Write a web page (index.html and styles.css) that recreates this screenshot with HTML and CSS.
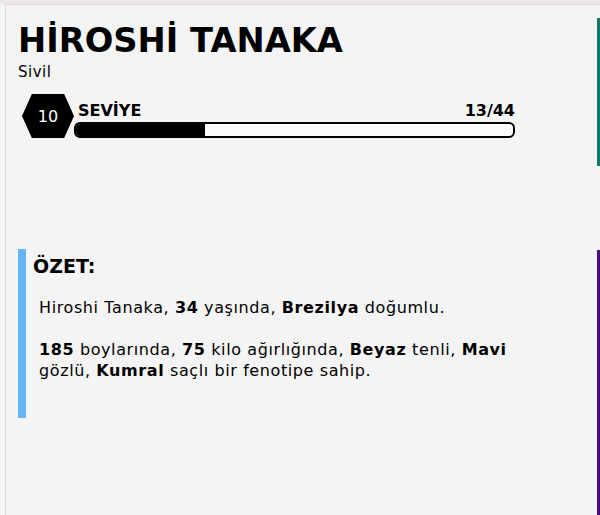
FILE: index.html
```html
<!DOCTYPE html>
<html lang="tr">
<head>
    <meta charset="UTF-8">
    <meta name="viewport" content="width=device-width, initial-scale=1">
    <title>Karakter</title>
    <link rel="stylesheet" href="styles.css">
</head>
<body>
    <div class="topbar"></div>

    <div class="frame">
        <div class="main">
            <div class="header">
                <h1 class="name">HİROSHİ TANAKA</h1>
                <div class="role">Sivil</div>

                <div class="level">
                    <div class="hex">10</div>
                    <div class="level-info">
                        <div class="level-head">
                            <span>SEVİYE</span>
                            <span class="xp">13/44</span>
                        </div>
                        <div class="bar">
                            <div class="bar-fill" style="width: 29.5%"></div>
                        </div>
                    </div>
                </div>
            </div>

            <div class="summary">
                <h2>ÖZET:</h2>
                <p>Hiroshi Tanaka, <b>34</b> yaşında, <b>Brezilya</b> doğumlu.</p>
                <p><b>185</b> boylarında, <b>75</b> kilo ağırlığında, <b>Beyaz</b> tenli, <b>Mavi</b> gözlü, <b>Kumral</b> saçlı bir fenotipe sahip.</p>
            </div>
        </div>

        <!-- yan kartlar, ekranın dışına taşıyor -->
        <div class="side">
            <div class="side-card teal"></div>
            <div class="side-card purple"></div>
        </div>
    </div>
</body>
</html>
```

FILE: styles.css
```css
html, body {
     margin: 0;
     height: 100%;
     overflow: hidden;
 }

body {
     display: flex;
     flex-direction: column;
     background-color: #f4f4f4;
     font-family: "DejaVu Sans", "Noto Sans", sans-serif;
     color: #000;
 }

.topbar {
     height: 4px;
     flex-shrink: 0;
     background-color: #e9e9e9;
 }

.frame {
     flex: 1;
     min-height: 0;
     display: flex;
     margin-left: 5px;
     border-top: 1px solid #f2cfd1;
     border-left: 1px solid #dadada;
 }

.main {
     flex: 0 0 579px;
     padding-left: 12px;
 }

.header {
     height: 244px;
 }

.name {
     margin: 0;
     padding-top: 16px;
     font-size: 33.7px;
     font-weight: bold;
     line-height: 40px;
 }

.role {
     font-size: 15px;
     letter-spacing: 0.5px;
     line-height: 18px;
     margin-top: 2px;
 }

.level {
     display: flex;
     align-items: flex-end;
     margin-top: 13px;
     margin-left: 4px;
 }

.hex {
     width: 52px;
     height: 44px;
     flex-shrink: 0;
     display: flex;
     align-items: center;
     justify-content: center;
     background-color: #000;
     color: #fff;
     font-size: 16px;
     clip-path: polygon(19% 0, 81% 0, 100% 50%, 81% 100%, 19% 100%, 0 50%);
 }

.level-info {
     width: 441px;
 }

.level-head {
     display: flex;
     justify-content: space-between;
     font-size: 16px;
     font-weight: 600;
     padding-left: 4px;
     line-height: 20px;
 }

.xp {
     font-weight: bold;
 }

.bar {
     height: 12px;
     margin-top: 1px;
     border: 2px solid #000;
     border-radius: 6px;
     background-color: #fbfbfb;
     overflow: hidden;
 }

.bar-fill {
     height: 100%;
     background-color: #000;
 }

.summary {
     height: 169px;
     border-left: 8px solid #66b5fb;
     padding-left: 7px;
     width: 480px;
 }

.summary h2 {
     margin: 0;
     padding-top: 6px;
     font-size: 19px;
     line-height: 22px;
 }

.summary p {
     margin: 20px 0 0 6px;
     font-size: 16px;
     letter-spacing: 0.6px;
     line-height: 21px;
 }

.summary p + p {
     margin-top: 21px;
 }

.side {
     flex: 1;
     display: flex;
     flex-direction: column;
     padding-top: 13px;
 }

.side-card {
     border-left: 3px solid;
 }

.teal {
     height: 148px;
     border-color: #0b7a6c;
 }

.purple {
     flex: 1;
     margin-top: 84px;
     border-color: #4a0b84;
 }
```
